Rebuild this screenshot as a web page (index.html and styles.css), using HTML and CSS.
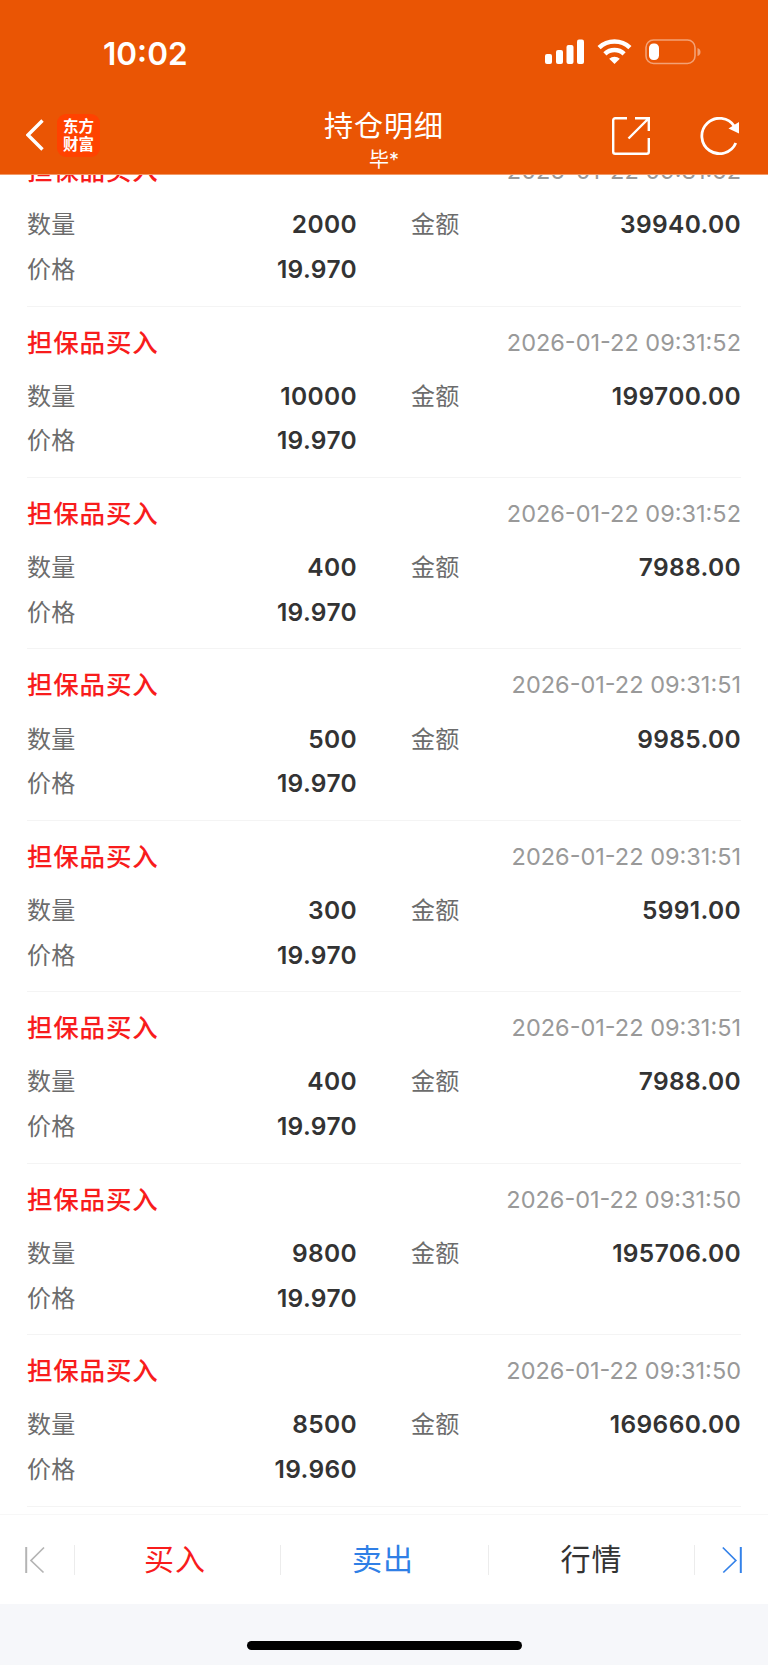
FILE: index.html
```html
<!DOCTYPE html>
<html lang="zh-CN">
<head>
    <meta charset="UTF-8">
    <title>持仓明细</title>
    <link rel="stylesheet" href="styles.css">
</head>
<body>
    <header class="header">
        <div class="status-bar">
            <span class="clock">10:02</span>
            <svg class="status-icons" width="158" height="28" viewBox="0 0 158 28">
                <g fill="#fff">
                    <rect x="1" y="16" width="7" height="10" rx="2"/>
                    <rect x="12" y="12" width="7" height="14" rx="2"/>
                    <rect x="22.500" y="7" width="7" height="19" rx="2"/>
                    <rect x="33" y="1.500" width="7" height="24.500" rx="2"/>
                    <path d="M70.500 26l-5.300-5.300a8 8 0 0 1 10.600 0z"/>
                </g>
                <g fill="none" stroke="#fff" stroke-width="4.600">
                    <path d="M55.100 9.600a22.500 22.500 0 0 1 30.800 0"/>
                    <path d="M60.900 15.800a14 14 0 0 1 19.200 0"/>
                </g>
                <rect x="102" y="2" width="49" height="23.500" rx="7.500" fill="none" stroke="#fff" stroke-opacity=".45" stroke-width="1.600"/>
                <path d="M153.500 10v8q3-1 3-4t-3-4z" fill="#fff" fill-opacity=".45"/>
                <rect x="105" y="5.500" width="10" height="16.500" rx="4.500" fill="#fff"/>
            </svg>
        </div>
        <nav class="nav-bar">
            <div class="nav-left">
                <svg width="18" height="32" viewBox="0 0 18 32">
                    <path d="M16.500 1.500L2 16l14.500 14.500" fill="none" stroke="#fff" stroke-width="3.400"/>
                </svg>
                <div class="logo"><span>东方</span><span>财富</span></div>
            </div>
            <div class="nav-title">
                <h1>持仓明细</h1>
                <p>毕*</p>
            </div>
            <div class="nav-right">
                <svg width="38" height="38" viewBox="0 0 38 38" fill="none" stroke="#fff" stroke-width="2.400">
                    <path d="M15 1.200H3.200a2 2 0 0 0-2 2v31.600a2 2 0 0 0 2 2h31.600a2 2 0 0 0 2-2V21"/>
                    <path d="M23 1.200h13.800V14M36.500 1.500L16.500 21.500"/>
                </svg>
                <svg width="40" height="38" viewBox="0 0 40 38">
                    <path d="M35.800 26A17.700 17.700 0 1 1 34.500 9.500" fill="none" stroke="#fff" stroke-width="2.800"/>
                    <path d="M28.500 11.500L39 5v11.500z" fill="#fff"/>
                </svg>
            </div>
        </nav>
    </header>

    <main class="list">
        <div id="records" class="records"></div>
    </main>

    <footer class="toolbar">
        <div class="tab-arrow">
            <svg width="20" height="28" viewBox="0 0 20 28" fill="none" stroke="#b4b4b4">
                <path d="M1.200 1v26" stroke-width="2"/>
                <path d="M19 1.500L6 14.500l12.500 12" stroke-width="1.700"/>
            </svg>
        </div>
        <div class="tab buy">买入</div>
        <div class="tab sell">卖出</div>
        <div class="tab quote">行情</div>
        <div class="tab-arrow last">
            <svg width="20" height="28" viewBox="0 0 20 28" fill="none" stroke="#3482e9">
                <path d="M18.800 1v26" stroke-width="2"/>
                <path d="M.800 1.500l13 13-12.500 12" stroke-width="1.700"/>
            </svg>
        </div>
    </footer>
    <div class="home-area">
        <div class="home-bar"></div>
    </div>

    <script>
        // time, quantity, amount, price
        var records = [
            ["09:31:52", "2000", "39940.00", "19.970"],
            ["09:31:52", "10000", "199700.00", "19.970"],
            ["09:31:52", "400", "7988.00", "19.970"],
            ["09:31:51", "500", "9985.00", "19.970"],
            ["09:31:51", "300", "5991.00", "19.970"],
            ["09:31:51", "400", "7988.00", "19.970"],
            ["09:31:50", "9800", "195706.00", "19.970"],
            ["09:31:50", "8500", "169660.00", "19.960"]
        ];

        var html = "";
        for (var i = 0; i < records.length; i++) {
            var r = records[i];
            html += '<section class="record">' +
                '<div class="record-head"><span class="type">担保品买入</span><span class="date">2026-01-22 ' + r[0] + '</span></div>' +
                '<div class="record-row"><span class="label">数量</span><span class="value">' + r[1] + '</span>' +
                '<span class="label">金额</span><span class="value">' + r[2] + '</span></div>' +
                '<div class="record-row"><span class="label">价格</span><span class="value">' + r[3] + '</span></div>' +
                '</section>';
        }
        document.getElementById("records").innerHTML = html;
    </script>
</body>
</html>
```
FILE: styles.css
```css
* {
    box-sizing: border-box;
}

body {
    margin: 0;
    height: 1665px;
    display: flex;
    flex-direction: column;
    overflow: hidden;
    background: #fff;
    color: #333;
    font-family: Inter, "Noto Sans CJK SC", sans-serif;
}

svg {
    display: block;
}

.header {
    flex: none;
    height: 175px;
    border-bottom: 1px solid #f29a68;
    background: #ea5504;
    color: #fff;
}

.status-bar {
    display: flex;
    justify-content: space-between;
    height: 98px;
    padding: 38px 66px 0 103px;
}

.clock {
    font-size: 31.5px;
    font-weight: 600;
    line-height: 31px;
}

.nav-bar {
    display: grid;
    grid-template-columns: 1fr 160px 1fr;
    height: 76px;
}

.nav-left {
    display: flex;
    align-items: center;
    gap: 13px;
    padding: 0 0 2px 26px;
}

.logo {
    display: flex;
    flex-direction: column;
    align-items: center;
    width: 43px;
    height: 43px;
    padding-top: 2px;
    border-radius: 9px;
    background: #ff4200;
    font-family: "Noto Sans CJK SC", sans-serif;
    font-size: 15.5px;
    font-weight: 700;
    line-height: 18px;
}

.nav-title {
    text-align: center;
}

.nav-title h1 {
    margin: 10px 0 0;
    font-size: 29px;
    font-weight: 400;
    line-height: 38px;
    letter-spacing: 1px;
    white-space: nowrap;
}

.nav-title p {
    margin: 2px 0 0;
    font-size: 20px;
    line-height: 24px;
}

.nav-right {
    display: flex;
    justify-content: flex-end;
    align-items: center;
    gap: 50px;
    padding: 0 28px 1px 0;
}

.list {
    flex: none;
    height: 1339.4px;
    padding: 0 27px;
    overflow: hidden;
}

.records {
    margin-top: -39.8px;
}

.record {
    height: 171.43px;
    padding-top: 13.5px;
    border-bottom: 1px solid #f4f4f4;
}

.record-head {
    display: flex;
    justify-content: space-between;
    align-items: center;
    height: 44px;
    margin-bottom: 9.3px;
}

.type {
    padding-bottom: 4px;
    color: #f81c1c;
    font-size: 25.5px;
    font-weight: 500;
    letter-spacing: 0.8px;
}

.date {
    color: #999;
    font-size: 23.5px;
}

.record-row {
    display: grid;
    grid-template-columns: 60px 270px 114px 270px;
    align-items: center;
    height: 44.7px;
}

.label {
    padding-bottom: 3px;
    color: #6c6c6c;
    font-size: 24px;
    font-weight: 400;
    letter-spacing: 0.3px;
}

.value + .label {
    padding-left: 54px;
}

.value {
    font-size: 24.5px;
    font-weight: 600;
    letter-spacing: 0.35px;
    text-align: right;
}

.toolbar {
    flex: none;
    display: grid;
    grid-template-columns: 75px 206px 208px 206px 73px;
    align-items: center;
    height: 89.6px;
    border-top: 1px solid #f7f7f7;
}

.tab-arrow {
    padding-left: 25px;
    border-right: 1px solid #ececec;
}

.tab-arrow,
.tab {
    display: flex;
    align-items: center;
    height: 30px;
}

.tab {
    justify-content: center;
    padding-bottom: 5px;
    border-right: 1px solid #ececec;
    font-size: 30px;
    letter-spacing: 1px;
}

.tab-arrow.last {
    padding-left: 27px;
    border-right: none;
}

.buy {
    padding-right: 5px;
    color: #f81c1c;
}

.sell {
    padding-right: 3px;
    color: #2f7fe6;
}

.home-area {
    flex: 1;
    padding-top: 37px;
    background: #f6f7fa;
}

.home-bar {
    width: 275px;
    height: 9px;
    margin: 0 auto;
    border-radius: 5px;
    background: #000;
}
```
